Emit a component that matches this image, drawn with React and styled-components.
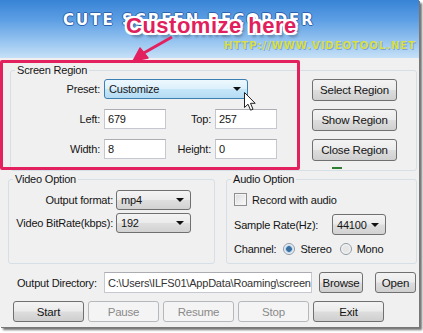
import React from "react";
import styled, { createGlobalStyle, css } from "styled-components";

const GlobalStyle = createGlobalStyle`
  body {
    margin: 0;
    background: #fff;
    font-family: "Liberation Sans", Arial, sans-serif;
  }
`;

const Stage = styled.div`
  width: 423px;
  height: 333px;
  overflow: hidden;
  background: #fff;
`;

const Window = styled.div`
  position: relative;
  width: 419px;
  height: 327px;
  display: flex;
  flex-direction: column;
  background: #f0f0f0;
  box-shadow: 1px 1px 0 #777, 3px 3px 2px rgba(0, 0, 0, 0.55);
  font-size: 11px;
  letter-spacing: -0.2px;
  color: #151515;
`;

const Header = styled.header`
  flex: none;
  height: 58px;
  box-sizing: border-box;
  padding: 12px 3px 0 63px;
  display: flex;
  flex-direction: column;
  background: linear-gradient(180deg, #3883d6 0%, #5d9fe4 35%, #9cc8f1 75%, #c6e0f7 100%);
`;

const Logo = styled.div`
  font-family: "DejaVu Sans", sans-serif;
  font-weight: bold;
  font-size: 15px;
  line-height: 16px;
  letter-spacing: 2px;
  color: #fff;
  text-shadow: 1px 0 #2d62ad, -1px 0 #2d62ad, 0 1px #2d62ad, 0 -1px #2d62ad;
`;

const Url = styled.div`
  align-self: flex-end;
  margin-top: 12px;
  font-family: "DejaVu Sans", sans-serif;
  font-weight: bold;
  font-size: 10px;
  line-height: 11px;
  letter-spacing: 1px;
  color: #d8df47;
  text-shadow: 1px 1px 0 rgba(40, 80, 140, 0.35);
`;

const Body = styled.div`
  flex: 1;
  display: flex;
  flex-direction: column;
  padding: 6px 2px 5px 8px;
`;

const GroupBox = styled.fieldset`
  position: relative;
  margin: 0;
  padding: 0;
  min-width: 0;
  border: 1px solid #d5dfe5;
  border-radius: 3px;
  box-sizing: border-box;
  legend {
    margin-left: 4px;
    padding: 0 2px;
    line-height: 13px;
  }
`;

const ScreenBox = styled(GroupBox)`
  margin-left: 2px;
`;

const ScreenInner = styled.div`
  display: flex;
  padding: 2px 19px 9px 0;
`;

const FieldGrid = styled.div`
  display: grid;
  grid-template-columns: 89px 62px 41px 62px;
  grid-auto-rows: 20px;
  column-gap: 4px;
  row-gap: 10px;
  align-items: center;
`;

const Label = styled.span`
  text-align: ${(p) => (p.left ? "left" : "right")};
  white-space: nowrap;
`;

const TextBox = styled.div`
  height: 20px;
  box-sizing: border-box;
  display: flex;
  align-items: center;
  padding-left: 3px;
  background: #fff;
  border: 1px solid #c5c8d0;
  border-top-color: #abadb3;
  width: ${(p) => p.w || 62}px;
  overflow: hidden;
  white-space: nowrap;
`;

const Combo = styled.div`
  box-sizing: border-box;
  height: ${(p) => p.h || 20}px;
  width: ${(p) => p.w}px;
  display: flex;
  align-items: center;
  justify-content: space-between;
  padding: 0 6px 0 4px;
  border-radius: 3px;
  border: 1px solid #707070;
  background: linear-gradient(180deg, #f4f4f4 0%, #ebebeb 48%, #dedede 52%, #d2d2d2 100%);
  ${(p) =>
    p.hot &&
    css`
      grid-column: 2 / span 3;
      border-color: #3c7fb1;
      background: linear-gradient(180deg, #eef8fe 0%, #dcf0fc 48%, #c6e6f9 52%, #b4dbf3 100%);
    `}
`;

const Caret = styled.span`
  width: 0;
  height: 0;
  border-left: 4px solid transparent;
  border-right: 4px solid transparent;
  border-top: 4px solid #111;
`;

const ButtonColumn = styled.div`
  margin-left: auto;
  display: flex;
  flex-direction: column;
  gap: 8px;
`;

const Button = styled.div`
  box-sizing: border-box;
  width: ${(p) => p.w}px;
  height: ${(p) => p.h || 21}px;
  display: flex;
  align-items: center;
  justify-content: center;
  border-radius: 3px;
  border: 1px solid #707070;
  background: linear-gradient(180deg, #f3f3f3 0%, #ebebeb 48%, #dddddd 52%, #cfcfcf 100%);
  font-size: 11.5px;
  ${(p) =>
    p.disabled &&
    css`
      border-color: #b5b9bc;
      background: #f4f4f4;
      color: #8a8a8a;
    `}
`;

const GreenTick = styled.span`
  position: absolute;
  left: 321px;
  bottom: 1px;
  width: 10px;
  height: 2px;
  background: #2f7d32;
`;

const OptionRow = styled.div`
  display: flex;
  gap: 11px;
  height: 91px;
  margin-top: 2px;
`;

const VideoBox = styled(GroupBox)`
  width: 207px;
  flex: none;
`;

const AudioBox = styled(GroupBox)`
  flex: 1;
`;

const VideoGrid = styled.div`
  display: grid;
  grid-template-columns: 97px 75px;
  grid-auto-rows: 20px;
  column-gap: 3px;
  row-gap: 3px;
  align-items: center;
  padding: 4px 0 0 7px;
`;

const AudioStack = styled.div`
  display: flex;
  flex-direction: column;
  padding: 7px 0 0 7px;
`;

const Line = styled.div`
  display: flex;
  align-items: center;
  height: ${(p) => p.h}px;
  margin-top: ${(p) => p.mt || 0}px;
`;

const CheckBox = styled.span`
  width: 13px;
  height: 13px;
  box-sizing: border-box;
  border: 1px solid #8f8f8f;
  background: linear-gradient(135deg, #dcdcdc, #fbfbfb);
  box-shadow: inset 0 0 0 1px #f4f4f4;
  margin-right: 5px;
`;

const Radio = styled.span`
  width: 12px;
  height: 12px;
  box-sizing: border-box;
  border-radius: 50%;
  border: 1px solid #8f9aa5;
  background: ${(p) =>
    p.on
      ? "radial-gradient(circle, #3b6f9e 0 2.5px, #8fbde6 3px, #dfe9f2 4px, #f7f7f7 5px)"
      : "radial-gradient(circle, #e6e6e6 0 3px, #f8f8f8 5px)"};
  margin: 0 5px 0 ${(p) => p.ml || 0}px;
`;

const OutputRow = styled.div`
  display: flex;
  align-items: center;
  height: 21px;
  margin-top: 8px;
  padding-left: 9px;
`;

const ActionRow = styled.div`
  display: flex;
  gap: 4px;
  margin-top: 8px;
  padding-left: 5px;
`;

const PinkFrame = styled.div`
  position: absolute;
  left: 0;
  top: 60px;
  width: 300px;
  height: 110px;
  box-sizing: border-box;
  border: 3px solid #e2215e;
  border-radius: 2px;
`;

const Callout = styled.div`
  position: absolute;
  left: 126px;
  top: 15px;
  font-family: "Liberation Sans", Arial, sans-serif;
  font-weight: bold;
  font-size: 22px;
  line-height: 22px;
  letter-spacing: 0.5px;
  color: #e01f5c;
  white-space: nowrap;
  text-shadow: 2px 0 #fff, -2px 0 #fff, 0 2px #fff, 0 -2px #fff, 1px 1px #fff,
    -1px -1px #fff, 1px -1px #fff, -1px 1px #fff, 2px 2px #fff, -2px 2px #fff,
    2px -2px #fff, -2px -2px #fff, 3px 4px 3px rgba(0, 0, 0, 0.35);
`;

const Overlay = styled.svg`
  position: absolute;
  left: ${(p) => p.x}px;
  top: ${(p) => p.y}px;
  overflow: visible;
`;

export default function App() {
  return (
    <Stage>
      <GlobalStyle />
      <Window>
        <Header>
          <Logo>CUTE SCREEN RECORDER</Logo>
          <Url>HTTP://WWW.VIDEOTOOL.NET</Url>
        </Header>

        <Body>
          <ScreenBox>
            <legend>Screen Region</legend>
            <ScreenInner>
              <FieldGrid>
                <Label>Preset:</Label>
                <Combo hot w={144}>
                  <span>Customize</span>
                  <Caret />
                </Combo>
                <Label>Left:</Label>
                <TextBox>679</TextBox>
                <Label>Top:</Label>
                <TextBox>257</TextBox>
                <Label>Width:</Label>
                <TextBox>8</TextBox>
                <Label>Height:</Label>
                <TextBox>0</TextBox>
              </FieldGrid>
              <ButtonColumn>
                <Button w={85} h={22}>Select Region</Button>
                <Button w={85} h={22}>Show Region</Button>
                <Button w={85} h={22}>Close Region</Button>
              </ButtonColumn>
            </ScreenInner>
            <GreenTick />
          </ScreenBox>

          <OptionRow>
            <VideoBox>
              <legend>Video Option</legend>
              <VideoGrid>
                <Label>Output format:</Label>
                <Combo w={75}>
                  <span>mp4</span>
                  <Caret />
                </Combo>
                <Label>Video BitRate(kbps):</Label>
                <Combo w={75}>
                  <span>192</span>
                  <Caret />
                </Combo>
              </VideoGrid>
            </VideoBox>
            <AudioBox>
              <legend>Audio Option</legend>
              <AudioStack>
                <Line h={13}>
                  <CheckBox />
                  Record with audio
                </Line>
                <Line h={21} mt={8}>
                  <Label left style={{ width: 98 }}>Sample Rate(Hz):</Label>
                  <Combo w={54} h={21}>
                    <span>44100</span>
                    <Caret />
                  </Combo>
                </Line>
                <Line h={13} mt={7}>
                  <Label left>Channel:</Label>
                  <Radio on ml={7} />
                  Stereo
                  <Radio ml={8} />
                  Mono
                </Line>
              </AudioStack>
            </AudioBox>
          </OptionRow>

          <OutputRow>
            <Label left style={{ width: 87 }}>Output Directory:</Label>
            <TextBox w={208} style={{ height: 21, color: "#333" }}>
              C:\Users\ILFS01\AppData\Roaming\screen
            </TextBox>
            <Button w={44} style={{ marginLeft: 7 }}>Browse</Button>
            <Button w={41} style={{ marginLeft: 12 }}>Open</Button>
          </OutputRow>

          <ActionRow>
            <Button w={71}>Start</Button>
            <Button w={71} disabled>Pause</Button>
            <Button w={71} disabled>Resume</Button>
            <Button w={71} disabled>Stop</Button>
            <Button w={71}>Exit</Button>
          </ActionRow>
        </Body>

        <PinkFrame />
        <Callout>Customize here</Callout>
        <Overlay x={126} y={33} width="60" height="32">
          <g fill="#e2215e" stroke="#e2215e" strokeLinejoin="round">
            <line x1="46" y1="4" x2="16" y2="21" strokeWidth="3" />
            <polygon points="7,28 14,15 22,25" strokeWidth="1.5" />
          </g>
        </Overlay>
        <Overlay x={244} y={92} width="13" height="20">
          <path
            d="M0.5 0.5 L0.5 15.5 L4 12.2 L6.6 18.2 L9 17.2 L6.5 11.3 L11.2 11.3 Z"
            fill="#fff"
            stroke="#222"
            strokeWidth="1"
            strokeLinejoin="round"
          />
        </Overlay>
      </Window>
    </Stage>
  );
}
